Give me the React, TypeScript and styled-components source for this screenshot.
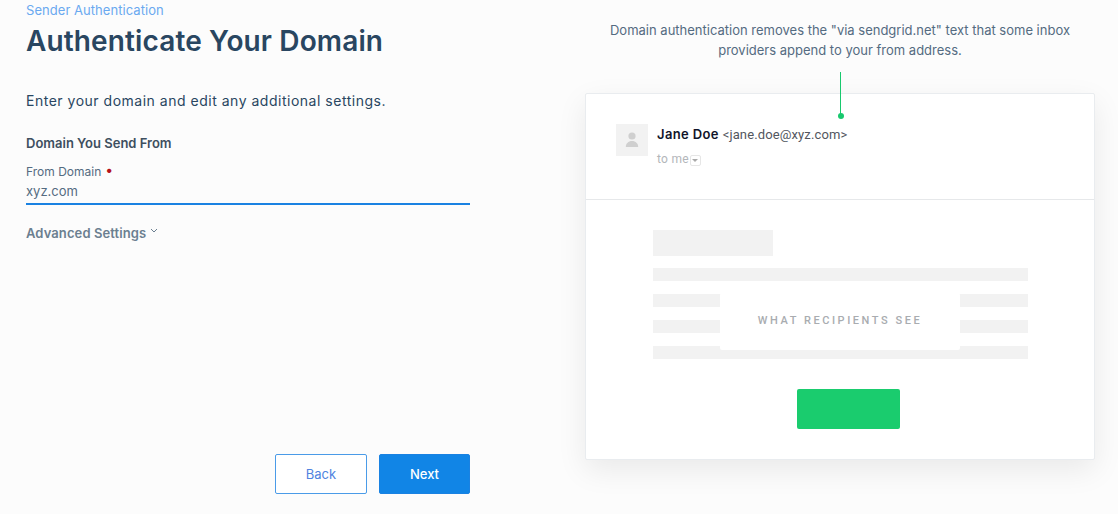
import React from 'react';
import styled, { createGlobalStyle } from 'styled-components';

const GlobalStyle = createGlobalStyle`
  html, body {
    margin: 0;
    padding: 0;
    background: #fcfcfc;
    font-family: Inter, "Liberation Sans", sans-serif;
  }
`;

const Page = styled.div`
  display: flex;
  width: 1118px;
  height: 514px;
  overflow: hidden;
  box-sizing: border-box;
  padding-left: 26px;
`;

const FormColumn = styled.div`
  display: flex;
  flex-direction: column;
  width: 444px;
  height: 494px;
`;

const Breadcrumb = styled.a`
  font-size: 13px;
  line-height: 20px;
  color: #6aa9f0;
  letter-spacing: 0.05px;
`;

const Title = styled.h1`
  margin: 3px 0 0;
  font-size: 28px;
  line-height: 36px;
  font-weight: 600;
  color: #294661;
  letter-spacing: 0.13px;
`;

const Intro = styled.p`
  margin: 32px 0 0;
  font-size: 14px;
  line-height: 20px;
  color: #294661;
  letter-spacing: 0.51px;
`;

const SectionLabel = styled.h2`
  margin: 22px 0 0;
  font-size: 13px;
  line-height: 20px;
  font-weight: 600;
  color: #3e4f5f;
`;

const Field = styled.div`
  margin-top: 10px;
  border-bottom: 2px solid #1a82e2;
  height: 42px;
  box-sizing: border-box;
`;

const FieldLabel = styled.label`
  display: block;
  font-size: 12px;
  line-height: 18px;
  color: #546b81;
`;

const Required = styled.span`
  color: #b5121b;
  margin-left: 4px;
  font-size: 14px;
  line-height: 12px;
  vertical-align: 1px;
`;

const FieldValue = styled.div`
  margin-top: 1px;
  font-size: 13px;
  line-height: 19px;
  color: #546b81;
`;

const Advanced = styled.div`
  display: flex;
  align-items: flex-start;
  gap: 4px;
  margin-top: 18px;
  font-size: 13px;
  line-height: 20px;
  font-weight: 600;
  color: #6b7f90;
  letter-spacing: 0.1px;
`;

const Actions = styled.div`
  display: flex;
  justify-content: flex-end;
  gap: 12px;
  margin-top: auto;
`;

const Button = styled.button<{ $primary?: boolean }>`
  width: ${(p) => (p.$primary ? '91px' : '92px')};
  height: 40px;
  box-sizing: border-box;
  border-radius: 2px;
  border: 1px solid ${(p) => (p.$primary ? '#1a82e2' : '#4a9be8')};
  background: ${(p) => (p.$primary ? '#1185e6' : '#fff')};
  color: ${(p) => (p.$primary ? '#fff' : '#4f83e0')};
  font-family: inherit;
  font-size: 13px;
  font-weight: ${(p) => (p.$primary ? 500 : 400)};
  padding: 0;
`;

const PreviewColumn = styled.div`
  display: flex;
  flex-direction: column;
  margin-left: 115px;
  width: 510px;
  flex: none;
`;

const Caption = styled.p`
  margin: 20px 0 0;
  height: 73px;
  box-sizing: border-box;
  font-size: 13px;
  line-height: 20px;
  color: #546b81;
  text-align: center;
`;

const Card = styled.div`
  position: relative;
  height: 367px;
  box-sizing: border-box;
  background: #fff;
  border: 1px solid #e9ecef;
  border-radius: 2px;
  box-shadow: 0 10px 30px rgba(0, 0, 0, 0.08);
`;

const Connector = styled.div`
  position: absolute;
  left: 254px;
  top: -22px;
  width: 1px;
  height: 44px;
  background: #18c96e;

  &::after {
    content: '';
    position: absolute;
    left: -2.5px;
    bottom: -3px;
    width: 6px;
    height: 6px;
    border-radius: 50%;
    background: #18c96e;
  }
`;

const MailHeader = styled.div`
  display: flex;
  gap: 9px;
  height: 106px;
  box-sizing: border-box;
  padding: 30px 30px 0;
  border-bottom: 1px solid #e6e8ea;
`;

const Avatar = styled.div`
  display: flex;
  align-items: center;
  justify-content: center;
  width: 32px;
  height: 32px;
  background: #f2f2f2;
`;

const Sender = styled.div`
  display: flex;
  flex-direction: column;
`;

const SenderLine = styled.div`
  display: flex;
  align-items: baseline;
  gap: 4px;
  line-height: 20px;
`;

const SenderName = styled.span`
  font-size: 13px;
  font-weight: 600;
  color: #10142a;
  letter-spacing: 0.35px;
`;

const SenderAddress = styled.span`
  font-family: Roboto, sans-serif;
  font-size: 13px;
  color: #52565e;
  letter-spacing: 0.12px;
`;

const ToLine = styled.div`
  display: flex;
  align-items: center;
  margin-top: 4px;
  font-size: 12px;
  line-height: 20px;
  color: #b3b6ba;
  font-family: Roboto, sans-serif;
  letter-spacing: 0.25px;
`;

const Caret = styled.span`
  display: flex;
  align-items: center;
  justify-content: center;
  width: 11px;
  height: 11px;
  margin: 3px 0 0 1px;
  box-sizing: border-box;
  border: 1px solid #e6e6e6;
  border-radius: 2px;

  &::after {
    content: '';
    border: 3px solid transparent;
    border-top-color: #a9a9a9;
    border-bottom: 0;
  }
`;

const MailBody = styled.div`
  position: relative;
  display: flex;
  flex-direction: column;
  padding: 30px 0 0 67px;
`;

const Bar = styled.div<{ $heading?: boolean }>`
  width: ${(p) => (p.$heading ? '120px' : '375px')};
  height: ${(p) => (p.$heading ? '26px' : '13px')};
  margin-bottom: ${(p) => (p.$heading ? '12px' : '13px')};
  background: #f2f2f2;
`;

const Overlay = styled.div`
  position: absolute;
  left: 134px;
  top: 93px;
  display: flex;
  align-items: center;
  justify-content: center;
  width: 240px;
  height: 57px;
  box-sizing: border-box;
  padding-bottom: 2px;
  background: #fff;
  border-radius: 2px;
  font-family: Roboto, sans-serif;
  font-size: 11px;
  font-weight: 500;
  letter-spacing: 2.55px;
  color: #a9acb0;
`;

const Cta = styled.div`
  width: 103px;
  height: 40px;
  margin: 17px 0 0 144px;
  border-radius: 2px;
  background: #1acc6e;
`;

const App = () => {
  return (
    <Page>
      <GlobalStyle />
      <FormColumn>
        <Breadcrumb>Sender Authentication</Breadcrumb>
        <Title>Authenticate Your Domain</Title>
        <Intro>Enter your domain and edit any additional settings.</Intro>
        <SectionLabel>Domain You Send From</SectionLabel>
        <Field>
          <FieldLabel>
            From Domain<Required>•</Required>
          </FieldLabel>
          <FieldValue>xyz.com</FieldValue>
        </Field>
        <Advanced>
          Advanced Settings
          <svg width="8" height="8" viewBox="0 0 8 8" fill="none" stroke="#6b7f90" strokeWidth="1" style={{ marginTop: 4 }}>
            <path d="M1 2l3 3 3-3" />
          </svg>
        </Advanced>
        <Actions>
          <Button>Back</Button>
          <Button $primary>Next</Button>
        </Actions>
      </FormColumn>
      <PreviewColumn>
        <Caption>
          Domain authentication removes the "via sendgrid.net" text that some inbox
          <br />
          providers append to your from address.
        </Caption>
        <Card>
          <Connector />
          <MailHeader>
            <Avatar>
              <svg width="14" height="16" viewBox="0 0 14 16" fill="#cfcfcf">
                <circle cx="7" cy="4" r="3.6" />
                <path d="M0.8 15c0-3.6 2.6-6 6.2-6s6.2 2.4 6.2 6z" />
              </svg>
            </Avatar>
            <Sender>
              <SenderLine>
                <SenderName>Jane Doe</SenderName>
                <SenderAddress>&lt;jane.doe@xyz.com&gt;</SenderAddress>
              </SenderLine>
              <ToLine>
                to me
                <Caret />
              </ToLine>
            </Sender>
          </MailHeader>
          <MailBody>
            <Bar $heading />
            <Bar />
            <Bar />
            <Bar />
            <Bar />
            <Overlay>WHAT RECIPIENTS SEE</Overlay>
            <Cta />
          </MailBody>
        </Card>
      </PreviewColumn>
    </Page>
  );
};

export default App;
